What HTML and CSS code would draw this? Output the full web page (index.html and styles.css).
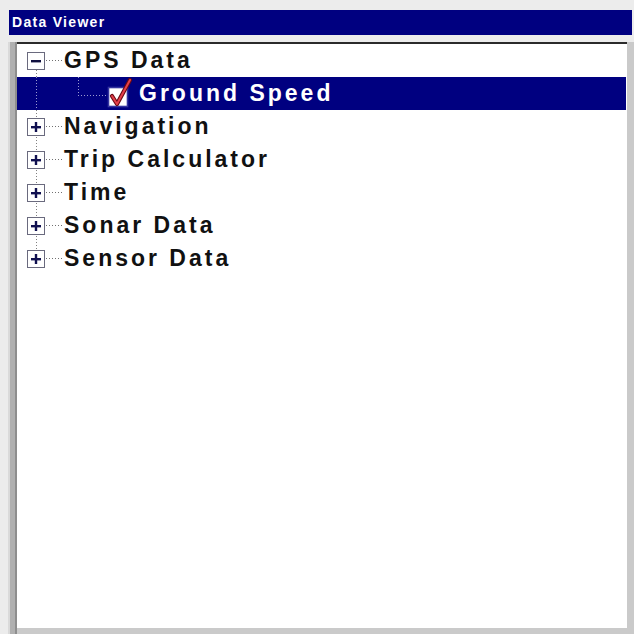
FILE: index.html
```html
<!DOCTYPE html>
<html>
<head>
<meta charset="utf-8">
<link rel="stylesheet" href="styles.css">
</head>
<body>
<div class="viewer">
  <div class="titlebar">Data Viewer</div>
  <div class="frame">
    <div class="tree">
      <div class="row">
        <div class="gutter first"><span class="box"><svg width="12" height="12" viewBox="0 0 12 12"><rect x="1" y="5" width="10" height="2.4" fill="#101040"/></svg></span></div>
        <div class="connector"></div>
        <div class="label">GPS Data</div>
      </div>
      <div class="row selected">
        <div class="gutter pass"></div>
        <div class="indent"></div>
        <div class="elbow"></div>
        <div class="check"><svg width="26" height="32" viewBox="0 0 26 32"><rect x="1.5" y="10.5" width="19" height="19" fill="#fff" stroke="#3434a0" stroke-width="1.6"/><path d="M5 19 L10 27 L23 3" fill="none" stroke="#6a0812" stroke-width="4.2" stroke-linecap="round" stroke-linejoin="round"/><path d="M5 19 L10 27 L23 3" fill="none" stroke="#e4404a" stroke-width="2" stroke-linecap="round" stroke-linejoin="round"/></svg></div>
        <div class="label">Ground Speed</div>
      </div>
      <div class="row">
        <div class="gutter"><span class="box"><svg width="12" height="12" viewBox="0 0 12 12"><rect x="1" y="5" width="10" height="2.4" fill="#101050"/><rect x="4.8" y="1" width="2.4" height="10" fill="#101050"/></svg></span></div>
        <div class="connector"></div>
        <div class="label">Navigation</div>
      </div>
      <div class="row">
        <div class="gutter"><span class="box"><svg width="12" height="12" viewBox="0 0 12 12"><rect x="1" y="5" width="10" height="2.4" fill="#101050"/><rect x="4.8" y="1" width="2.4" height="10" fill="#101050"/></svg></span></div>
        <div class="connector"></div>
        <div class="label">Trip Calculator</div>
      </div>
      <div class="row">
        <div class="gutter"><span class="box"><svg width="12" height="12" viewBox="0 0 12 12"><rect x="1" y="5" width="10" height="2.4" fill="#101050"/><rect x="4.8" y="1" width="2.4" height="10" fill="#101050"/></svg></span></div>
        <div class="connector"></div>
        <div class="label">Time</div>
      </div>
      <div class="row">
        <div class="gutter"><span class="box"><svg width="12" height="12" viewBox="0 0 12 12"><rect x="1" y="5" width="10" height="2.4" fill="#101050"/><rect x="4.8" y="1" width="2.4" height="10" fill="#101050"/></svg></span></div>
        <div class="connector"></div>
        <div class="label">Sonar Data</div>
      </div>
      <div class="row">
        <div class="gutter last"><span class="box"><svg width="12" height="12" viewBox="0 0 12 12"><rect x="1" y="5" width="10" height="2.4" fill="#101050"/><rect x="4.8" y="1" width="2.4" height="10" fill="#101050"/></svg></span></div>
        <div class="connector"></div>
        <div class="label">Sensor Data</div>
      </div>
    </div>
  </div>
</div>
</body>
</html>
```

FILE: styles.css
```css
html, body {
  margin: 0;
  padding: 0;
  background: #ececec;
}
body {
  width: 634px;
  height: 634px;
  overflow: hidden;
  font-family: "Liberation Sans", Arial, sans-serif;
}
.viewer {
  padding-top: 10px;
}
.titlebar {
  margin-left: 9px;
  margin-right: 2px;
  height: 25px;
  background: #000080;
  color: #fff;
  font-weight: bold;
  font-size: 14px;
  line-height: 25px;
  padding-left: 3px;
  letter-spacing: 1.3px;
}
.frame {
  margin: 7px 0 0 8px;
  padding: 0 7px 6px 9px;
  background: linear-gradient(to right, #dadada 0 2px, #b0b0b0 2px 7px, #8e8e8e 7px 9px, #cacaca 9px);
}
.tree {
  border-top: 2px solid #2a2a2a;
  background: #fff;
  height: 584px;
}
.row {
  display: flex;
  height: 33px;
  padding-left: 10px;
  font-size: 23px;
  font-weight: bold;
  letter-spacing: 3px;
  line-height: 33px;
  color: #111;
}
.row.selected {
  background: #000080;
  color: #fff;
  margin-right: 1px;
}
.gutter {
  width: 19px;
  display: flex;
  align-items: center;
  background-image: repeating-linear-gradient(to bottom, #808080 0 1px, transparent 1px 3px);
  background-size: 1px 100%;
  background-position: 9px 0;
  background-repeat: no-repeat;
}
.gutter.first {
  background-size: 1px 50%;
  background-position: 9px 100%;
}
.gutter.last {
  background-size: 1px 50%;
  background-position: 9px 0;
}
.selected .gutter {
  background-image: repeating-linear-gradient(to bottom, #9a9ad0 0 1px, transparent 1px 3px);
}
.box {
  width: 16px;
  height: 16px;
  border: 1px solid #6a6a7e;
  background: #fff;
  display: flex;
  align-items: center;
  justify-content: center;
}
.connector {
  width: 17px;
  background-image: repeating-linear-gradient(to right, #707070 0 1px, transparent 1px 3px);
  background-size: 100% 1px;
  background-position: 0 50%;
  background-repeat: no-repeat;
}
.label {
  margin-left: 1px;
  white-space: nowrap;
}
.indent {
  width: 32px;
}
.elbow {
  width: 29px;
  background-image:
    repeating-linear-gradient(to bottom, #9a9ad0 0 1px, transparent 1px 3px),
    repeating-linear-gradient(to right, #9a9ad0 0 1px, transparent 1px 3px);
  background-size: 1px 55%, 100% 1px;
  background-position: 0 0, 0 55%;
  background-repeat: no-repeat;
}
.check {
  width: 26px;
  display: flex;
  align-items: flex-start;
}
.selected .label {
  margin-left: 6px;
}
```
